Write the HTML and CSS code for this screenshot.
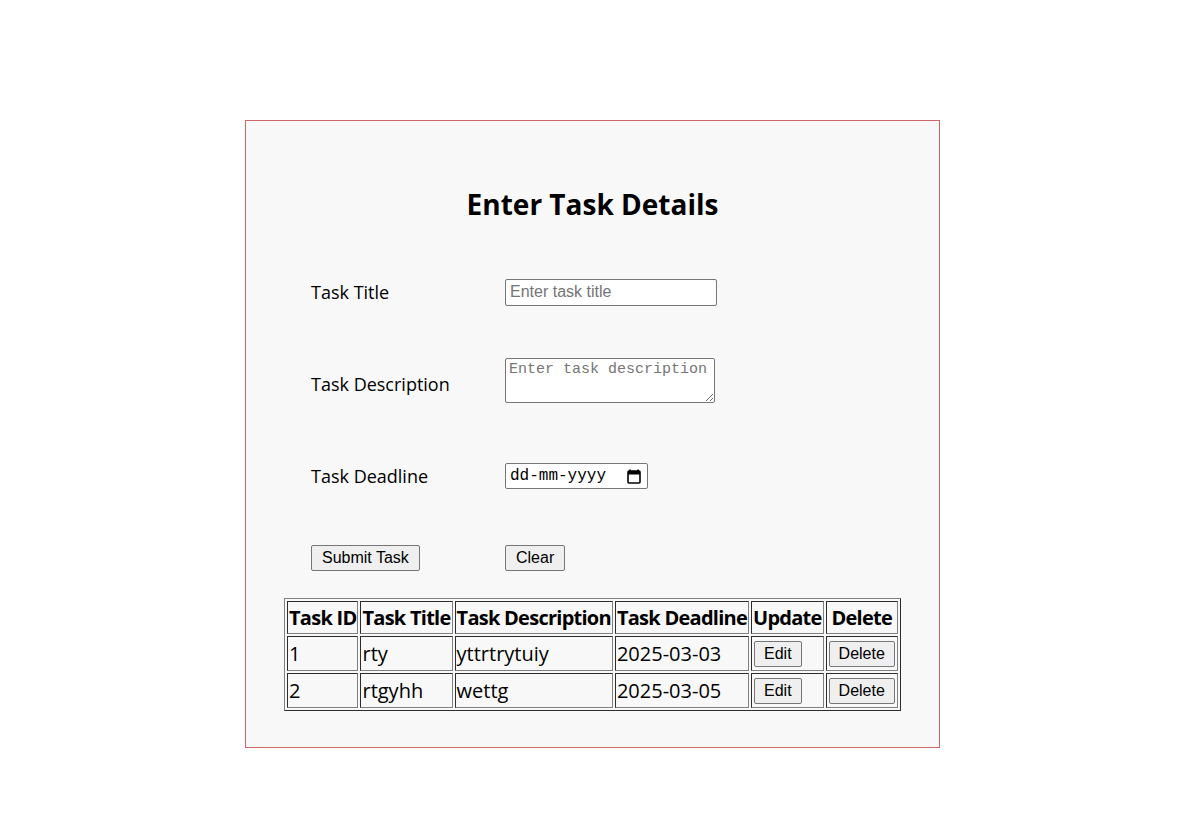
FILE: index.html
```html
<!DOCTYPE html>
<html lang="en-GB">
<head>
<meta charset="utf-8">
<link rel="stylesheet" href="styles.css">
</head>
<body>
<div class="card">
  <h1 class="title">Enter Task Details</h1>
  <div class="form">
    <div class="row">
      <label class="lbl">Task Title</label>
      <input class="txt" type="text" placeholder="Enter task title">
    </div>
    <div class="row">
      <label class="lbl">Task Description</label>
      <textarea class="area" placeholder="Enter task description"></textarea>
    </div>
    <div class="row">
      <label class="lbl">Task Deadline</label>
      <span class="date">
        <input class="date-in" type="text" placeholder="dd-mm-yyyy">
        <svg class="cal" width="14" height="15" viewBox="0 0 14 15"><path d="M3 0.5v2M11 0.5v2" stroke="#000" stroke-width="1.6"/><rect x="1" y="2" width="12" height="12" rx="1" fill="none" stroke="#000" stroke-width="1.6"/><rect x="1" y="2" width="12" height="3.5" fill="#000"/></svg>
      </span>
    </div>
    <div class="row btnrow">
      <div class="cell"><button class="btn">Submit Task</button></div>
      <div class="cell"><button class="btn">Clear</button></div>
    </div>
  </div>
  <table class="tasks" border="1">
    <thead>
      <tr><th>Task ID</th><th>Task Title</th><th>Task Description</th><th>Task Deadline</th><th>Update</th><th>Delete</th></tr>
    </thead>
    <tbody>
      <tr><td>1</td><td>rty</td><td>yttrtrytuiy</td><td>2025-03-03</td><td><button class="btn sm">Edit</button></td><td><button class="btn sm">Delete</button></td></tr>
      <tr><td>2</td><td>rtgyhh</td><td>wettg</td><td>2025-03-05</td><td><button class="btn sm">Edit</button></td><td><button class="btn sm">Delete</button></td></tr>
    </tbody>
  </table>
</div>
</body>
</html>
```
FILE: styles.css
```css
html, body {
  margin: 0;
  background: #ffffff;
  font-family: "Open Sans", "Noto Sans", sans-serif;
}
.card {
  margin: 120px 0 0 245px;
  width: 693px;
  height: 626px;
  border: 1px solid #d06565;
  background: #f8f8f8;
  box-sizing: content-box;
}
.title {
  margin: 63px 0 0 0;
  text-align: center;
  font-size: 28px;
  font-weight: 700;
  line-height: 40px;
}
.form {
  display: flex;
  flex-direction: column;
  margin: 22px 0 0 65px;
}
.row {
  display: grid;
  grid-template-columns: 194px auto;
  align-items: center;
  height: 92px;
}
.lbl {
  font-size: 18px;
  color: #000;
}
.txt {
  width: 212px;
  height: 27px;
  box-sizing: border-box;
  font-family: "Liberation Sans", Arial, sans-serif;
  font-size: 16px;
  border: 1px solid #767676;
  border-radius: 2px;
  padding: 1px 4px;
  background: #fff;
}
.txt::placeholder { color: #757575; }
.area {
  align-self: start;
  margin-top: 20px;
  width: 210px;
  height: 45px;
  box-sizing: border-box;
  font-family: "Liberation Mono", monospace;
  font-size: 15px;
  border: 1px solid #767676;
  border-radius: 2px;
  padding: 2px 3px;
  resize: both;
  background: #fff;
}
.area::placeholder { color: #757575; }
.date {
  position: relative;
  display: inline-flex;
  align-items: center;
  width: 143px;
  height: 26px;
  box-sizing: border-box;
  border: 1px solid #767676;
  border-radius: 2px;
  background: #fff;
}
.date-in {
  width: 110px;
  border: none;
  outline: none;
  padding: 0 0 0 4px;
  background: transparent;
  font-family: "Liberation Mono", monospace;
  font-size: 16px;
}
.date-in::placeholder { color: #000; }
.cal {
  position: absolute;
  right: 6px;
  top: 5px;
}
.btnrow { height: 72px; }
.btn {
  font-family: "Liberation Sans", Arial, sans-serif;
  font-size: 16px;
  height: 26px;
  padding: 1px 10px;
  border: 1px solid #767676;
  border-radius: 2px;
  background: #efefef;
  color: #000;
}
.tasks {
  margin: 4px 0 0 38px;
  border-collapse: separate;
  border-spacing: 2px;
  font-size: 20px;
  white-space: nowrap;
}
.tasks th, .tasks td {
  padding: 1px;
  text-align: left;
}
.tasks th {
  text-align: center;
  letter-spacing: -0.74px;
  height: 29px;
  line-height: 29px;
}
.tasks td { height: 30px; }
.sm { margin: 2px 1px; padding: 1px 9px; }
```
